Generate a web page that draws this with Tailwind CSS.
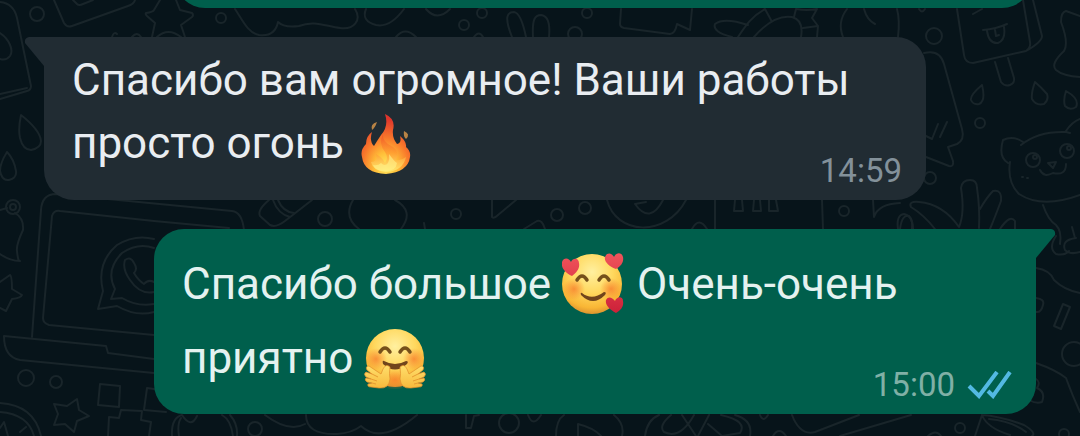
<!DOCTYPE html>
<html lang="ru">
<head>
  <meta charset="UTF-8">
  <meta name="viewport" content="width=device-width, initial-scale=1.0">
  <script src="https://cdn.jsdelivr.net/npm/@tailwindcss/browser@4"></script>
  <title>Чат</title>
</head>
<body class="relative min-h-screen overflow-hidden bg-[#07141a] font-[Roboto,sans-serif]">

  <!-- wallpaper -->
  <svg class="absolute top-0 left-0" width="1080" height="436" fill="none" stroke="#19252a" stroke-width="2" stroke-linecap="round" stroke-linejoin="round" aria-hidden="true">
    <!-- top left -->
    <path d="M0 2C10 3 15 9 17 18L31 86Q31 90 27 91L0 99M0 94L27 88M0 33C9 39 14 50 10 56Q6 61 0 59"/>
    <circle cx="37" cy="14" r="7"/>
    <path d="M54 0L64 23Q67 28 72 26L128 6Q134 4 135 0M73 0L77 4Q79 6 83 4L93 0"/>
    <path d="M160 0L154 10Q153 12 146 13Q145 14 147 16L155 23L152 37M176 0L180 10L192 13Q194 15 192 17L181 25L185 37M157 37Q168 27 181 37"/>
    <circle cx="221" cy="18" r="5"/>
    <path d="M112 37Q114 31 117 34M132 37Q137 31 141 37"/>
    <path d="M235 9C243 21 248 33 259 35Q275 37 278 22Q284 28 299 26C314 20 325 26 340 28C354 30 362 20 355 9"/>
    <path d="M404 9Q390 28 376 25Q361 21 366 9M426 9Q437 22 450 9M396 37Q405 26 416 37"/>
    <circle cx="464" cy="25" r="5"/><circle cx="482" cy="13" r="5"/><circle cx="587" cy="13" r="5"/><circle cx="575" cy="34" r="7"/>
    <path d="M474 37Q479 30 483 37M512 37C504 17 507 12 514 12Q521 13 526 37M533 37C532 19 535 15 541 15Q551 16 549 37"/>
    <path d="M621 9L620 24Q620 27 624 28L670 34Q675 34 677 24L690 30L692 9"/>
    <path d="M738 37C746 25 752 16 765 9L771 20M748 25Q724 17 715 24Q712 32 732 37M754 37Q774 14 792 17Q804 20 801 37M794 17L796 9Q807 11 817 9L812 18L818 26L817 37M803 28L818 26"/>
    <path d="M847 9Q837 22 843 37M864 9Q867 20 875 24M897 9Q900 20 898 37"/>
    <path d="M919 9Q922 14 925 9"/>
    <!-- left side -->
    <path d="M21 115Q18 129 20 138Q23 150 31 150Q41 148 41 141Q40 130 21 115ZM7 152Q0 163 0 171Q2 181 9 180Q17 178 16 171Q14 159 7 152Z"/>
    <circle cx="13" cy="207" r="7"/><circle cx="13" cy="207" r="3"/>
    <path d="M0 210L7 208M15 213Q24 218 23 230Q16 245 17 251Q18 262 20 261Q10 261 0 254"/>
    <path d="M0 282L10 275Q12 276 12 289L22 295Q21 298 12 299L6 311L0 308"/>
    <path d="M32 337L41 210Q42 194 56 194L232 211Q242 212 244 230M154 310"/>
    <path d="M154 335L49 325Q43 323 43 318L52 216Q54 210 60 211L154 221L229 228"/>
    <path d="M4 336L106 346L108 353L154 359M4 336Q4 357 20 360L154 373"/>
    <path d="M154 239Q135 234 117 245Q96 263 103 291L98 309L117 306Q136 317 154 312M154 248Q138 242 122 253Q105 270 115 289L111 299L122 298Q137 307 154 304M125 260Q131 256 134 263Q138 269 134 273Q138 280 144 284Q148 279 154 282M154 292Q140 295 130 280Q122 269 125 260"/>
    <circle cx="26" cy="378" r="8"/><circle cx="56" cy="382" r="6"/>
    <path d="M77 399L79 410L89 416L77 421L74 432L65 424L54 425L58 414L54 404L67 406Z"/>
    <path d="M100 384L120 386L119 407L98 405ZM154 389L147 388L144 410L166 412M108 436L109 417L119 418L121 410L142 411L141 420L151 422L149 436"/>
    <path d="M0 403Q34 405 41 436M0 412Q28 414 34 436M0 428L4 422L8 436M20 432L26 427"/>
    <!-- between bubbles -->
    <path d="M269 200Q257 210 260 216L270 225Q276 228 285 221L312 200M273 200Q278 214 290 217M278 200Q283 212 294 213"/>
    <circle cx="325" cy="219" r="7"/><circle cx="456" cy="214" r="5"/>
    <path d="M353 200Q343 217 359 229M395 200Q415 211 401 229M425 229L424 223M492 200V217Q494 219 498 215L516 200M524 229L537 221Q542 219 545 229"/>
    <circle cx="557" cy="215" r="6"/><circle cx="585" cy="208" r="6"/><circle cx="844" cy="211" r="5"/>
    <path d="M607 200C616 235 666 238 686 200M635 204Q650 225 663 200M635 204L646 202M692 229Q699 216 707 229M715 200V229M735 200L734 211H743L742 200M754 200L753 211H761L760 200M769 200L769 211H778L776 200M822 200L823 229M873 200L874 217Q878 204 900 203M898 229Q896 215 904 214Q913 216 913 229"/>
    <!-- right side -->
    <circle cx="934" cy="36" r="8"/><circle cx="980" cy="123" r="5"/><circle cx="930" cy="178" r="6"/>
    <path d="M957 9L964 55Q965 63 973 63L1026 51Q1031 48 1030 42L1023 0M1033 0L1042 36Q1042 42 1026 51M973 14L982 9M983 30Q996 29 1007 24M987 31Q989 44 998 43Q1006 40 1004 27M995 30L996 36L999 35"/>
    <path d="M995 62L1001 82Q1005 87 1010 85Q1015 83 1014 78L1008 58"/>
    <path d="M924 53Q940 49 944 64L962 129Q965 140 957 144L948 147L953 161Q954 167 949 166L926 157M926 136L932 139L938 124M940 137L947 122"/>
    <path d="M1080 16L1066 11Q1061 12 1061 22Q1069 43 1064 51Q1050 64 1056 70Q1063 76 1080 77"/>
    <path d="M982 85Q970 95 971 100Q973 105 979 104Q986 101 982 85ZM1035 82Q1031 93 1032 99Q1036 106 1044 104Q1049 100 1047 94Q1041 87 1035 82ZM1066 91Q1063 100 1065 106Q1070 111 1076 107Q1080 99 1066 91Z"/>
    <path d="M1021 145Q1038 131 1066 132L1070 133M1066 131Q1072 122 1080 119M1023 142Q1013 135 1003 140Q998 157 1008 163M1010 162Q1007 182 1019 194Q1042 209 1080 195"/>
    <circle cx="1033" cy="160" r="7"/><circle cx="1067" cy="151" r="7"/><circle cx="1035" cy="157" r="2"/><circle cx="1069" cy="148" r="2"/>
    <path d="M1048 163L1056 162L1053 168ZM1040 170Q1044 178 1053 173Q1066 176 1066 164M1022 177H1023M1027 178H1028"/>
    <path d="M1043 205Q1048 220 1056 225Q1062 231 1060 244M1072 227L1075 238"/>
    <path d="M935 229Q924 215 911 207Q908 201 919 202Q943 204 959 227Q965 213 961 188Q962 180 970 180Q977 180 977 188Q980 208 979 228M980 209Q987 197 993 191Q1002 189 1001 201Q995 217 990 229M1000 229Q1010 214 1015 221V229M900 229Q902 214 909 216Q913 220 912 229"/>
    <path d="M1056 236Q1048 248 1056 254Q1064 256 1069 251M1076 238Q1061 240 1065 250Q1070 255 1080 252M1036 268Q1050 270 1054 280Q1064 290 1080 293"/>
    <path d="M1036 298Q1045 299 1043 305Q1041 313 1036 312M1063 304L1070 307L1061 329L1054 326Z"/>
    <circle cx="1074" cy="354" r="12"/>
    <path d="M1036 363Q1056 370 1066 378Q1073 397 1080 412M1036 379Q1041 382 1037 388Q1046 392 1042 402Q1036 404 1029 400"/>
    <!-- bottom -->
    <path d="M172 436Q171 418 182 415Q191 429 197 416M179 436Q177 424 181 418M222 415Q231 420 233 436M230 415Q238 424 237 436"/>
    <circle cx="255" cy="429" r="7"/>
    <path d="M265 415Q289 433 305 424M306 415Q306 435 337 434Q352 433 361 426Q381 445 417 415M466 415V428H471L474 416L479 415M528 415Q533 428 541 415M556 436Q556 420 564 415M578 436V424Q594 428 601 436M614 415Q625 424 622 436"/>
    <circle cx="509" cy="423" r="10"/>
    <path d="M645 436Q647 420 659 415M671 415Q658 426 664 432Q680 440 694 415M682 415L696 436M709 415L698 436M721 415Q748 421 740 433L722 436L708 424M735 415Q753 420 750 436M760 415Q763 423 768 415M792 415Q800 436 815 432L859 415M840 436L911 415"/>
    <circle cx="960" cy="428" r="5"/>
    <path d="M773 436Q779 426 786 436M928 436Q936 429 941 436M975 436L982 415Q1000 416 1024 425Q1037 433 1032 436M982 415Q987 428 1010 435M989 419Q1012 421 1026 432"/>
    <circle cx="1064" cy="434" r="5"/>
  </svg>

  <main class="relative flex flex-col">
    <div class="-mt-22 mr-12 ml-[175px] h-24 rounded-[30px] bg-[#005f4c]"></div>

    <!-- incoming -->
    <article class="relative mt-[29px] mr-[154px] ml-11 rounded-[30px] rounded-tl-none bg-[#212c33] pt-3 pb-[25px] pl-7">
      <svg class="absolute top-0 -left-5" width="21" height="30" fill="#212c33" aria-hidden="true"><path d="M21 0H5Q0 1 1 6L20 29H21Z"/></svg>
      <p class="text-[44px] leading-[63px] whitespace-nowrap text-[#e9edf1]">Спасибо вам огромное! Ваши работы<br>просто огонь
        <svg class="mx-1.5 inline-block h-[60px] w-[50px] align-[-16px]" viewBox="0 0 50 60" role="img" aria-label="огонь">
          <defs>
            <radialGradient id="fire" cx=".5" cy=".88" r=".8">
              <stop offset="0" stop-color="#ffe860"/><stop offset=".3" stop-color="#ffbd38"/><stop offset=".6" stop-color="#f9792b"/><stop offset="1" stop-color="#df352c"/>
            </radialGradient>
            <linearGradient id="flame" x1="0" y1="0" x2="0" y2="1">
              <stop offset="0" stop-color="#ef5428"/><stop offset=".5" stop-color="#ff9b30"/><stop offset="1" stop-color="#fff07a"/>
            </linearGradient>
          </defs>
          <path fill="#b88345" d="M16 8Q9 10 11 16Q14 14 16 8ZM43 17Q50 20 45 25Q42 22 43 17Z"/>
          <path fill="url(#fire)" d="M24 0Q35 5 32 16Q31 24 36 30Q41 29 39 22Q46 28 45 33Q50 37 49 43Q47 58 25 60Q3 59 1 43Q-1 36 5 30Q5 22 11 18Q8 27 13 32Q16 27 20 21Q28 12 24 0Z"/>
          <path fill="url(#flame)" opacity=".8" d="M22 20Q17 29 24 38Q28 44 24 49Q21 43 15 40Q17 48 10 48Q12 57 25 58Q42 57 45 43Q40 47 35 46Q39 38 32 33Q21 28 22 20Z"/>
          <path fill="#fff18a" opacity=".6" d="M28 40Q33 47 36 49Q35 57 25 57Q14 57 12 51Q17 52 20 49Q24 53 27 49Q29 45 28 40Z"/>
        </svg>
      </p>
      <time class="absolute right-6 bottom-2 text-[33px] leading-[42px] text-[#83919a]">14:59</time>
    </article>

    <!-- outgoing -->
    <article class="relative mt-[29px] mr-11 ml-[154px] rounded-[30px] rounded-tr-none bg-[#005f4c] pt-[18px] pb-[19px] pl-7">
      <svg class="absolute top-0 -right-5" width="21" height="30" fill="#005f4c" aria-hidden="true"><path d="M0 0H16Q21 1 20 6L1 29H0Z"/></svg>
      <p class="text-[44px] leading-[74px] whitespace-nowrap text-[#e4f2f0]">Спасибо большое
        <svg class="mr-0.5 inline-block h-[62px] w-[62px] align-[-16px]" viewBox="0 0 62 62" role="img" aria-label="улыбка с сердечками">
          <defs>
            <radialGradient id="face" cx=".5" cy=".3" r=".7">
              <stop offset="0" stop-color="#fff0a0"/><stop offset=".5" stop-color="#ffd85e"/><stop offset=".85" stop-color="#f9b635"/><stop offset="1" stop-color="#dd942f"/>
            </radialGradient>
            <radialGradient id="blush"><stop offset="0" stop-color="#f77b2c" stop-opacity=".75"/><stop offset="1" stop-color="#f77b2c" stop-opacity="0"/></radialGradient>
            <linearGradient id="heart" x1="0" y1="0" x2="0" y2="1"><stop offset="0" stop-color="#f0545b"/><stop offset="1" stop-color="#cd2139"/></linearGradient>
          </defs>
          <circle cx="30" cy="31" r="30" fill="url(#face)"/>
          <circle cx="12" cy="36" r="11" fill="url(#blush)"/><circle cx="49" cy="36" r="11" fill="url(#blush)"/>
          <path fill="none" stroke="#75501b" stroke-width="3.5" stroke-linecap="round" d="M15 27Q20 19 25 27M37 27Q42 19 47 27"/>
          <path fill="#71451c" d="M20 40Q30 48 42 39Q45 39 43 42Q31 54 19 42Q18 39 20 40Z"/>
          <path fill="url(#heart)" d="M10 23C2 19 -1 14 0 9C2 4 7 5 9 9C11 4 17 5 17 10C18 15 15 19 10 23ZM54 16C46 13 42 8 43 4C45 -1 50 0 52 4C54 -1 60 -1 61 4C62 9 59 13 54 16ZM54 60C47 56 43 52 44 47C46 43 50 44 53 48C55 43 61 43 61 48C62 53 59 57 54 60Z"/>
        </svg>
        Очень-очень<br>приятно
        <svg class="inline-block h-[62px] w-[62px] align-[-16px]" viewBox="0 0 62 62" role="img" aria-label="обнимаю">
          <defs>
            <linearGradient id="hand" x1="0" y1="0" x2="0" y2="1"><stop offset="0" stop-color="#ffdf6c"/><stop offset="1" stop-color="#f8b93c"/></linearGradient>
          </defs>
          <circle cx="31" cy="31" r="29" fill="url(#face)"/>
          <circle cx="12" cy="32" r="11" fill="url(#blush)"/><circle cx="50" cy="32" r="11" fill="url(#blush)"/>
          <ellipse cx="31" cy="53" rx="15" ry="10" fill="url(#blush)"/>
          <path fill="none" stroke="#75501b" stroke-width="3.5" stroke-linecap="round" d="M16 25Q21 17 26 25M36 25Q41 17 46 25"/>
          <path fill="#71451c" d="M20 34Q31 40 42 34Q45 34 43 37Q31 48 19 37Q18 33 20 34Z"/>
          <g id="palm">
            <path fill="url(#hand)" stroke="#e18c2b" stroke-width=".7" d="M26 40Q22 36 19 42L17 47L5 39Q1 39 3 43L8 47L2 45Q-1 47 2 50L7 52L2 51Q0 53 3 55L8 56L4 57Q3 60 7 60L15 61Q25 62 26 52Q25 47 26 40Z"/>
            <path fill="none" stroke="#e79c32" d="M8 47L14 50M7 52L13 54M8 56L12 57"/>
          </g>
          <use href="#palm" transform="matrix(-1 0 0 1 62 0)"/>
        </svg>
      </p>
      <div class="absolute right-6 bottom-2 flex items-center gap-3 text-[33px] leading-[42px] text-[#80b0a6]">
        <time>15:00</time>
        <svg width="45" height="28" fill="none" stroke="#53b9e2" stroke-width="4" role="img" aria-label="прочитано"><path d="M2 15L12 25L30 1M21 20L26 25L43 1"/></svg>
      </div>
    </article>
  </main>
</body>
</html>
